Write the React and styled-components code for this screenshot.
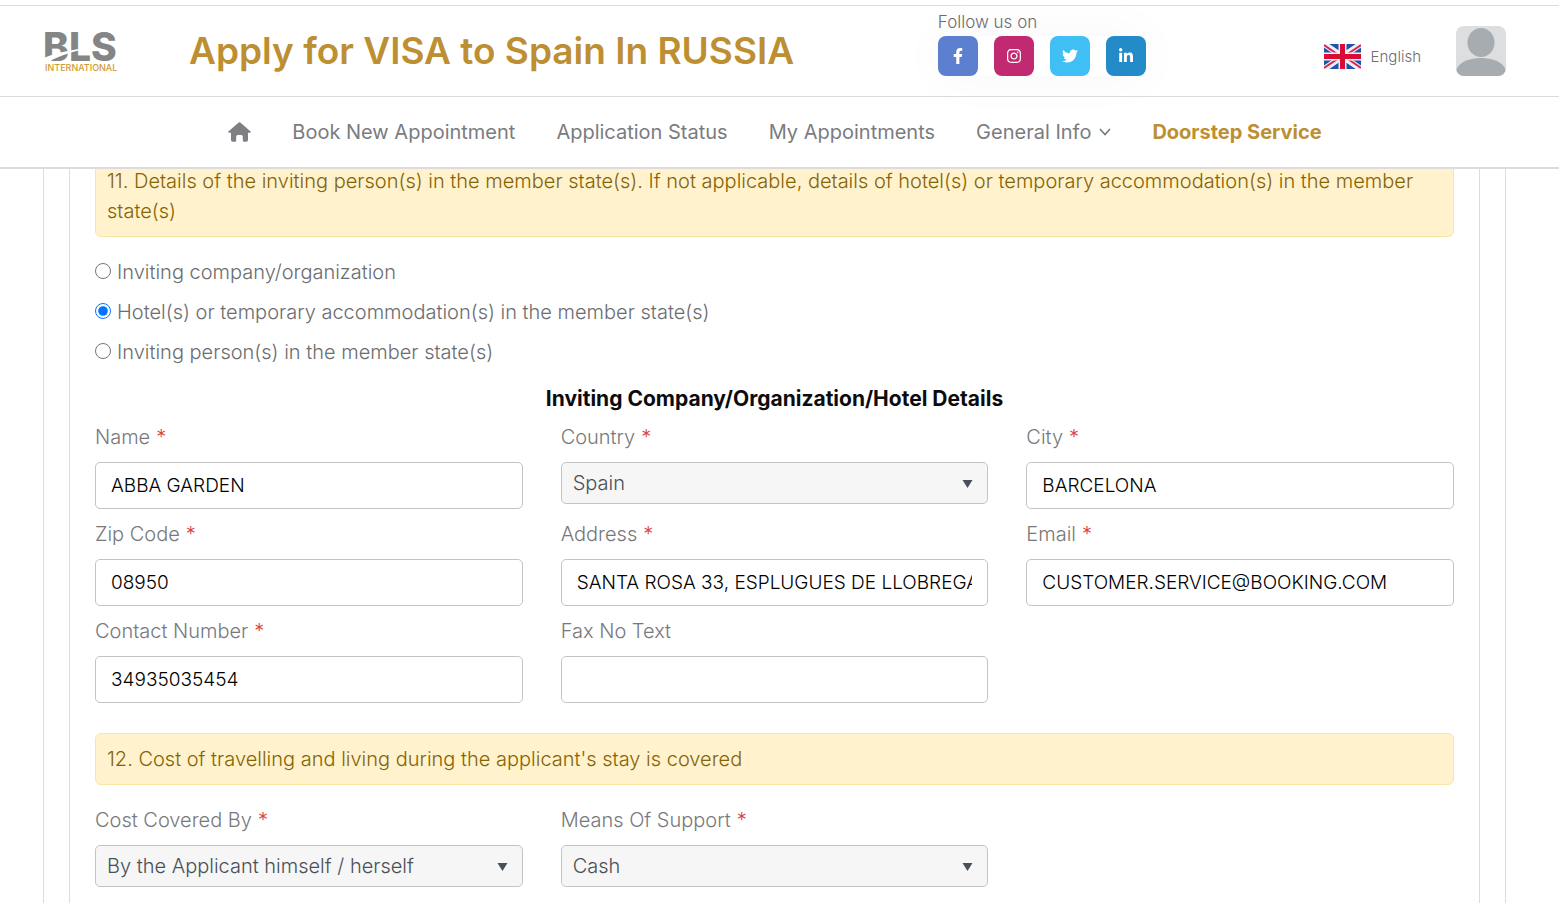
import React from 'react'
import styled, { createGlobalStyle, css } from 'styled-components'
import {
  FaFacebookF,
  FaInstagram,
  FaTwitter,
  FaLinkedinIn,
} from 'react-icons/fa'

const colors = {
  gold: '#bd8f32',
  text: '#6b6d70',
  label: '#77797c',
  line: '#dcdcde',
  field: '#c3c4c8',
  select: '#495057',
  required: '#d9413f',
}

const GlobalStyle = createGlobalStyle`
  *, *::before, *::after {
    box-sizing: border-box;
  }

  body {
    margin: 0;
    background: #fff;
    color: ${colors.text};
    font-family: Inter, 'Open Sans', sans-serif;
    font-size: 20px;
    font-weight: 300;
    line-height: 30px;
  }
`

const Page = styled.div`
  display: flex;
  flex-direction: column;
  min-height: 100vh;
  padding-top: 5px;
`

const Header = styled.header`
  position: sticky;
  top: 0;
  z-index: 1;
  background: #fff;
  border-top: 1px solid ${colors.line};
  border-bottom: 2px solid ${colors.line};
`

const TopBar = styled.div`
  display: grid;
  grid-template-columns: 145px 66fr 34fr auto 85px;
  align-items: center;
  height: 91px;
  padding: 0 53px 0 44px;
  border-bottom: 1px solid ${colors.line};
`

const SiteTitle = styled.h1`
  margin: 0;
  color: ${colors.gold};
  font-size: 37px;
  font-weight: 600;
  line-height: 44px;
  white-space: nowrap;
`

const Follow = styled.div`
  font-size: 17px;
  line-height: 20px;
  margin-bottom: 14px;
`

const SocialList = styled.div`
  display: flex;
  gap: 16px;
  width: max-content;
  margin-top: 4px;
  border-radius: 40px;
  box-shadow: 0 0 50px 4px rgba(20, 20, 80, 0.03);
`

const SocialLink = styled.a`
  display: flex;
  align-items: center;
  justify-content: center;
  width: 40px;
  height: 40px;
  border-radius: 8px;
  background: ${({ $bg }) => $bg};
  color: #fff;
  font-size: 16px;
`

const Language = styled.a`
  display: flex;
  align-items: center;
  gap: 10px;
  padding-top: 11px;
  color: ${colors.text};
  font-size: 15px;
  line-height: 24px;
  text-decoration: none;
`

const Profile = styled.button`
  justify-self: end;
  width: 50px;
  height: 50px;
  padding: 0;
  overflow: hidden;
  border: 0;
  border-radius: 8px;
  background: #dcdee0;

  svg {
    display: block;
  }
`

const Nav = styled.nav`
  display: flex;
  align-items: center;
  justify-content: center;
  gap: 41px;
  height: 70px;
  padding: 0 53px 0 44px;
`

const NavLink = styled.a`
  display: flex;
  align-items: center;
  gap: 8px;
  color: #7a7c7f;
  font-size: 20px;
  font-weight: 400;
  text-decoration: none;
  white-space: nowrap;

  ${({ $strong }) =>
    $strong &&
    css`
      color: ${colors.gold};
      font-weight: 700;
    `}
`

// The form is scrolled a little way under the sticky header
const Main = styled.main`
  display: flex;
  flex: 1;
  margin-top: -14px;
  padding: 0 53px 0 43px;
`

const Card = styled.div`
  display: flex;
  flex: 1;
  min-width: 0;
  padding: 0 25px;
  border: solid ${colors.line};
  border-width: 0 1px;
`

const Form = styled.form`
  flex: 1;
  min-width: 0;
  padding: 0 25px 16px;
  border: solid ${colors.line};
  border-width: 0 1px;
`

const Notice = styled.div`
  padding: 10px 11px;
  border: 1px solid #fae6a4;
  border-radius: 6px;
  background: #fff2cd;
  color: #856404;
`

const RadioGroup = styled.div`
  margin-top: 15px;
`

const RadioLabel = styled.label`
  display: flex;
  align-items: center;
  gap: 6px;
  height: 40px;

  input {
    width: 16px;
    height: 16px;
    margin: 0 0 3px;
  }
`

const FormTitle = styled.h2`
  margin: 12px 0 8px;
  color: #0c0c0e;
  font-size: 21px;
  font-weight: 700;
  line-height: 30px;
  text-align: center;
`

const Fields = styled.div`
  display: grid;
  grid-template-columns: repeat(3, minmax(0, 1fr));
  align-items: start;
  gap: 10px 38px;
  margin-bottom: ${({ $last }) => ($last ? '0' : '30px')};
  margin-top: ${({ $last }) => ($last ? '20px' : '0')};
`

const FieldLabel = styled.label`
  display: block;
  margin-bottom: 10px;
  color: ${colors.label};
`

const Required = styled.span`
  margin-left: 6px;
  color: ${colors.required};
`

const fieldStyle = css`
  display: block;
  width: 100%;
  border: 1px solid ${colors.field};
  border-radius: 5px;
  font: inherit;
`

const Input = styled.input`
  ${fieldStyle}
  height: 47px;
  padding: 0 15px;
  background: #fff;
  color: #000;
  font-size: 19px;
`

const SelectBox = styled.div`
  display: grid;
  align-items: center;

  > * {
    grid-area: 1 / 1;
  }

  svg {
    justify-self: end;
    margin-right: 15px;
    pointer-events: none;
  }
`

const Select = styled.select`
  ${fieldStyle}
  height: 42px;
  padding: 0 36px 0 11px;
  appearance: none;
  background: #f6f6f6;
  color: ${colors.select};
`

const LogoImage = styled.svg`
  overflow: visible;
`

const Logo = () => (
  <LogoImage width="80" height="48" viewBox="0 0 80 48" role="img">
    <title>BLS International</title>
    <g fontFamily="Inter, sans-serif">
      <text x="-1" y="34" fontSize="39" fontWeight="800" fill="#858585">
        BLS
      </text>
      <path d="M0 31C10 26 28 23 47 20C30 25 15 28 5 35H0Z" fill="#fff" />
      <text x="1" y="44" fontSize="9" fontWeight="500" fill="#cf9a35">
        INTERNATIONAL
      </text>
    </g>
  </LogoImage>
)

const Flag = () => (
  <svg width="37" height="25" viewBox="0 0 37 25" aria-hidden="true">
    <path fill="#1b55ad" d="M0 0h37v25H0z" />
    <path d="M0 0L37 25M37 0L0 25" stroke="#f3f0f4" strokeWidth="6" />
    <path
      d="M0 1L16 12M37 24L21 13M37 1L22 11M0 24L15 14"
      stroke="#d8264a"
      strokeWidth="2"
    />
    <path d="M18.500 0V25M0 12.500H37" stroke="#f3f0f4" strokeWidth="8" />
    <path d="M18.500 0V25M0 12.500H37" stroke="#d80c35" strokeWidth="5" />
  </svg>
)

const Avatar = () => (
  <svg width="50" height="50" viewBox="0 0 50 50" aria-hidden="true">
    <ellipse cx="25" cy="16.500" rx="13.500" ry="14.500" fill="#a6acaf" />
    <ellipse cx="25" cy="46" rx="25" ry="14" fill="#a6acaf" />
  </svg>
)

const Home = () => (
  <svg width="23" height="20" viewBox="0 0 23 20" role="img">
    <title>Home</title>
    <path
      d="M10.700.5q.8-.7 1.600 0L22.600 9.400q.8 1.100-.6 1.300H20V18q0 1.700-1.700 1.700h-2.200q-1.300 0-1.300-1.300V14.500q0-1.500-1.500-1.500h-3.600q-1.500 0-1.500 1.500v3.900q0 1.300-1.300 1.300H4.700Q3 19.700 3 18v-7.300H1Q-.4 10.500.4 9.400Z"
      fill="#7d7f82"
    />
  </svg>
)

const Chevron = () => (
  <svg width="12" height="8" viewBox="0 0 12 8" aria-hidden="true">
    <path d="M1 1L6 6.500L11 1" fill="none" stroke="#77797c" strokeWidth="1.600" />
  </svg>
)

const Caret = () => (
  <svg width="11" height="9" viewBox="0 0 11 9" aria-hidden="true">
    <path d="M.5 1H10.500L5.500 9Z" fill={colors.select} />
  </svg>
)

const socials = [
  { name: 'Facebook', bg: '#5c7fd0', Icon: FaFacebookF },
  { name: 'Instagram', bg: '#c12a71', Icon: FaInstagram },
  { name: 'Twitter', bg: '#40bff5', Icon: FaTwitter },
  { name: 'LinkedIn', bg: '#238bc8', Icon: FaLinkedinIn },
]

const hosts = [
  'Inviting company/organization',
  'Hotel(s) or temporary accommodation(s) in the member state(s)',
  'Inviting person(s) in the member state(s)',
]

const hotelFields = [
  { id: 'name', label: 'Name', value: 'ABBA GARDEN', required: true },
  { id: 'country', label: 'Country', value: 'Spain', required: true, select: true },
  { id: 'city', label: 'City', value: 'BARCELONA', required: true },
  { id: 'zip', label: 'Zip Code', value: '08950', required: true },
  {
    id: 'address',
    label: 'Address',
    value: 'SANTA ROSA 33, ESPLUGUES DE LLOBREGAT',
    required: true,
  },
  {
    id: 'email',
    label: 'Email',
    value: 'CUSTOMER.SERVICE@BOOKING.COM',
    required: true,
  },
  { id: 'phone', label: 'Contact Number', value: '34935035454', required: true },
  { id: 'fax', label: 'Fax No Text', value: '' },
]

const costFields = [
  {
    id: 'cost',
    label: 'Cost Covered By',
    value: 'By the Applicant himself / herself',
    required: true,
    select: true,
  },
  { id: 'means', label: 'Means Of Support', value: 'Cash', required: true, select: true },
]

const Field = ({ id, label, value, required, select }) => (
  <div>
    <FieldLabel htmlFor={id}>
      {label}
      {required && <Required>*</Required>}
    </FieldLabel>
    {select ? (
      <SelectBox>
        <Select id={id} defaultValue={value}>
          <option>{value}</option>
        </Select>
        <Caret />
      </SelectBox>
    ) : (
      <Input id={id} type="text" defaultValue={value} />
    )}
  </div>
)

const App = () => (
  <Page>
    <GlobalStyle />
    <Header>
      <TopBar>
        <Logo />
        <SiteTitle>Apply for VISA to Spain In RUSSIA</SiteTitle>
        <Follow>
          Follow us on
          <SocialList>
            {socials.map(({ name, bg, Icon }) => (
              <SocialLink key={name} href="#" aria-label={name} $bg={bg}>
                <Icon />
              </SocialLink>
            ))}
          </SocialList>
        </Follow>
        <Language href="#">
          <Flag />
          English
        </Language>
        <Profile type="button" aria-label="Profile">
          <Avatar />
        </Profile>
      </TopBar>
      <Nav>
        <NavLink href="#">
          <Home />
        </NavLink>
        <NavLink href="#">Book New Appointment</NavLink>
        <NavLink href="#">Application Status</NavLink>
        <NavLink href="#">My Appointments</NavLink>
        <NavLink href="#">
          General Info
          <Chevron />
        </NavLink>
        <NavLink href="#" $strong>
          Doorstep Service
        </NavLink>
      </Nav>
    </Header>
    <Main>
      <Card>
        <Form>
          <Notice>
            11. Details of the inviting person(s) in the member state(s). If not
            applicable, details of hotel(s) or temporary accommodation(s) in the
            member state(s)
          </Notice>
          <RadioGroup>
            {hosts.map((host, i) => (
              <RadioLabel key={host}>
                <input type="radio" name="host" defaultChecked={i === 1} />
                {host}
              </RadioLabel>
            ))}
          </RadioGroup>
          <FormTitle>Inviting Company/Organization/Hotel Details</FormTitle>
          <Fields>
            {hotelFields.map((field) => (
              <Field key={field.id} {...field} />
            ))}
          </Fields>
          <Notice>
            12. Cost of travelling and living during the applicant's stay is
            covered
          </Notice>
          <Fields $last>
            {costFields.map((field) => (
              <Field key={field.id} {...field} />
            ))}
          </Fields>
        </Form>
      </Card>
    </Main>
  </Page>
)

export default App
